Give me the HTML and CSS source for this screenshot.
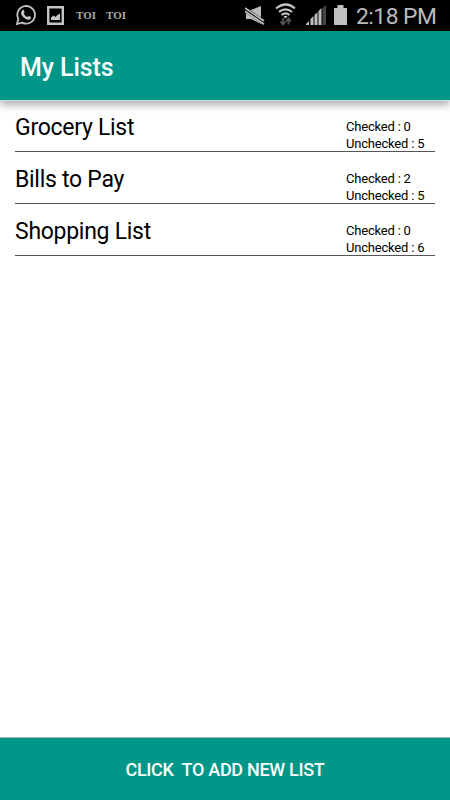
FILE: index.html
```html
<!DOCTYPE html>
<html lang="en">
<head>
<meta charset="utf-8">
<title>My Lists</title>
<link rel="stylesheet" href="styles.css">
</head>
<body>
<div class="status">
  <svg class="whatsapp" width="22" height="22" viewBox="0 0 22 22"><path d="M2 20l1.400-5A8.800 8.800 0 1 1 7 18.600z" fill="none" stroke="#c4c4c4" stroke-width="1.800"/><path d="M7.300 6.200c.7-.6 1.300-.5 1.600.2l.7 1.700c.2.5-.7 1.200-.7 1.600.7 1.500 1.900 2.600 3.400 3.200.5 0 1.100-1.200 1.600-1l2 1c.7.5-.3 2.200-1.300 2.600-2.200.8-5.200-.8-7-3C5.800 10.300 5.500 8 7.300 6.200z" fill="#c4c4c4"/></svg>
  <svg class="picture" width="17" height="19" viewBox="0 0 17 19"><path d="M1.200 1.200h14.600v16.600H1.200z" fill="none" stroke="#c4c4c4" stroke-width="2.400"/><path d="M4 14V11.500l2.500-2 2 1.500 2-2 2.500-1.500V14z" fill="#c4c4c4"/></svg>
  <span class="toi">TOI</span>
  <span class="toi">TOI</span>
  <span class="spacer"></span>
  <svg class="mute" width="20" height="20" viewBox="0 0 20 20"><path d="M1 4h5l10-4v18L6 13H1z" fill="#bdbdbd"/><path d="M0 3.500l19 13" stroke="#000" stroke-width="5"/><path d="M0 2l19 13M0 5.300l19 13" stroke="#bdbdbd" stroke-width="1.800"/></svg>
  <svg class="wifi" width="22" height="23" viewBox="0 0 22 23"><g fill="none" stroke="#c4c4c4" stroke-width="2.200"><path d="M1 5.500q10-8 19 0M4 8.800q6.500-5 13 0M6.500 12q4-3.200 8 0"/></g><path d="M8.500 13.500q2-1.500 4 0l-2 2z" fill="#c4c4c4"/><path d="M8 15v6M5.500 18.500L8 21.500l2.500-3M13.500 21.500V16M11 18.500l2.500-3 2.500 3" fill="none" stroke="#555" stroke-width="1.800"/></svg>
  <svg class="signal" width="20" height="20" viewBox="0 0 20 20"><path d="M0 20v-1l3-3v4zM4.500 20v-6l3-3v9zM8.500 20V10l3-3v13zM12.500 20V6l3-3v17z" fill="#c0c0c0"/><path d="M16.500 20V3L20 0v20z" fill="#444"/></svg>
  <svg class="battery" width="13" height="20" viewBox="0 0 13 20"><path d="M3.500 0h6v3H13v17H0V3h3.500z" fill="#c0c0c0"/></svg>
  <span class="clock">2:18 PM</span>
</div>
<header class="bar"><h1>My Lists</h1></header>
<main class="lists">
  <section class="row"><h2>Grocery List</h2><p>Checked : 0<br>Unchecked : 5</p></section>
  <section class="row"><h2>Bills to Pay</h2><p>Checked : 2<br>Unchecked : 5</p></section>
  <section class="row"><h2>Shopping List</h2><p>Checked : 0<br>Unchecked : 6</p></section>
</main>
<button class="add">CLICK&nbsp; TO ADD NEW LIST</button>
</body>
</html>
```
FILE: styles.css
```css
* { box-sizing: border-box; }
body {
  margin: 0;
  height: 800px;
  display: flex;
  flex-direction: column;
  background: #fff;
  color: #000;
  font-family: Roboto, sans-serif;
  overflow: hidden;
}
h1, h2, p { margin: 0; }
.status {
  height: 31px;
  flex: none;
  display: flex;
  align-items: flex-start;
  background: #000;
  color: #bcbcbc;
}
.status svg { flex: none; }
.whatsapp { margin: 4px 0 0 15px; }
.picture { margin: 6px 12px 0 10px; }
.toi {
  width: 30px;
  padding-top: 9px;
  font: bold 11px/13px "Liberation Serif", serif;
  color: #aaa;
}
.spacer { flex: 1; }
.mute { margin: 6px 10px 0 0; }
.wifi { margin: 3px 9px 0 0; }
.signal { margin: 5px 8px 0 0; }
.battery { margin: 5px 9px 0 0; }
.clock {
  width: 94px;
  padding-top: 3px;
  font-size: 22.8px;
  letter-spacing: -.5px;
  line-height: 27px;
  font-weight: 400;
  white-space: nowrap;
}
.bar {
  height: 70px;
  flex: none;
  padding: 21px 20px 0;
  background: #009788;
  border-bottom: 1px solid #c8e5e2;
  box-shadow: 0 4px 8px rgba(0, 0, 0, .32);
  color: #fff;
}
h1 {
  font-size: 25px;
  letter-spacing: -.1px;
  line-height: 32px;
  font-weight: 500;
}
.lists {
  flex: 1;
  padding: 0 15px;
}
.row {
  height: 52px;
  display: flex;
  justify-content: space-between;
  border-bottom: 1px solid #555;
}
.row:first-child { height: 51px; }
h2 {
  padding-top: 14px;
  font-size: 23px;
  letter-spacing: -.28px;
  line-height: 28px;
  font-weight: 400;
}
.row:first-child h2 { padding-top: 13px; }
.row p {
  width: 89px;
  padding-top: 18px;
  font-size: 13px;
  letter-spacing: -.2px;
  line-height: 17px;
}
.row:first-child p { padding-top: 17px; }
.add {
  height: 63px;
  flex: none;
  padding: 1px 0 0;
  border: 0;
  border-top: 1px solid #a5bbb8;
  background: #009788;
  color: #fff;
  font: 500 18px Roboto, sans-serif;
  letter-spacing: -.3px;
}
```
